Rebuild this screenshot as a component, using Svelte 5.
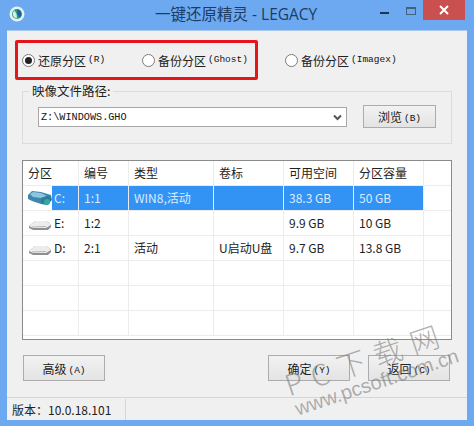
<script>
	const columns = ['分区', '编号', '类型', '卷标', '可用空间', '分区容量', ''];
	const rows = [
		{ drive: 'C:', cells: ['1:1', 'WIN8,活动', '', '38.3 GB', '50 GB'], selected: true },
		{ drive: 'E:', cells: ['1:2', '', '', '9.9 GB', '10 GB'] },
		{ drive: 'D:', cells: ['2:1', '活动', 'U启动U盘', '9.7 GB', '13.8 GB'] },
		{ drive: '', cells: ['', '', '', '', ''] },
		{ drive: '', cells: ['', '', '', '', ''] },
		{ drive: '', cells: ['', '', '', '', ''] }
	];
</script>

<div class="window">
	<header class="titlebar">
		<svg class="logo" width="16" height="16" viewBox="0 0 16 16">
			<circle cx="8" cy="8" r="7.500" fill="#e4f3ee" />
			<circle cx="8" cy="8" r="5" fill="#2a9a8a" />
			<path d="M8 3.500a4.500 4.500 0 0 1 2.500 8L8.500 8z" fill="#1d5c96" />
			<path d="M8 12.500a4.500 4.500 0 0 1-2.500-8L7.500 8z" fill="#d4f0e6" />
		</svg>
		<h1>一键还原精灵 - LEGACY</h1>
		<div class="controls">
			<span class="min"></span>
			<span class="max"></span>
			<span class="close">
				<svg width="10" height="10" viewBox="0 0 10 10"><path d="M1 1l8 8M9 1l-8 8" stroke="#fff" stroke-width="2" /></svg>
			</span>
		</div>
	</header>

	<main class="body">
		<div class="content">
			<div class="modes">
				<div class="highlight"></div>
				<label class="radio first"><span class="dot on"></span>还原分区<em>(R)</em></label>
				<label class="radio second"><span class="dot"></span>备份分区<em>(Ghost)</em></label>
				<label class="radio"><span class="dot"></span>备份分区<em>(Imagex)</em></label>
			</div>

			<fieldset class="image-group">
				<legend>映像文件路径:</legend>
				<div class="combo">
					<span>Z:\WINDOWS.GHO</span>
					<svg width="9" height="7" viewBox="0 0 9 7"><path d="M1 1.500l3.500 3.500 3.500-3.500" fill="none" stroke="#555" stroke-width="2" /></svg>
				</div>
				<button class="btn browse">浏览<em>(B)</em></button>
			</fieldset>

			<div class="table">
				<div class="row head">
					{#each columns as col}
						<div class="cell">{col}</div>
					{/each}
				</div>
				{#each rows as row}
					<div class="row" class:selected={row.selected}>
						<div class="cell drive">
							{#if row.drive}
								<svg class="disk" width="24" height="18" viewBox="0 0 24 18">
									{#if row.selected}
										<path d="M0 6l4-4 9 1 10 3 1 5-5 5-6-1-9-3-4-2z" fill="#3f86ad" />
										<path d="M2 5l3-2 8 1 6 3-6 2-8-1z" fill="#8fc4df" />
										<path d="M13 9l6-2 4 1v4l-4 4-6-2z" fill="#2b7d9b" />
										<circle cx="19" cy="13" r="3" fill="#37a89c" />
									{:else}
										<path d="M1 12l6-5 12 0 4 4v2l-3 3H5l-4-2z" fill="#8f8f8f" />
										<path d="M1 12l6-5 12 0 4 4-5 3H5z" fill="#ececec" />
										<path d="M4 13l14-.5" stroke="#b5b5b5" />
									{/if}
								</svg>
								<span class="letter">{row.drive}</span>
							{/if}
						</div>
						{#each row.cells as value}
							<div class="cell">{value}</div>
						{/each}
						<div class="cell tail"></div>
					</div>
				{/each}
			</div>

			<div class="actions">
				<button class="btn">高级<em>(A)</em></button>
				<div class="right">
					<button class="btn">确定<em>(Y)</em></button>
					<button class="btn">返回<em>(C)</em></button>
				</div>
			</div>
		</div>

		<footer class="status"><span>版本：10.0.18.101</span></footer>
	</main>

	<div class="watermark">
		<div class="big">P C 下 载 网</div>
		<div class="url">www.pcsoft.com.cn</div>
	</div>
</div>

<style>
	:global(body) {
		margin: 0;
	}

	.window {
		position: relative;
		width: 474px;
		height: 426px;
		overflow: hidden;
		background: #6ca9f0;
		display: flex;
		flex-direction: column;
		font-family: 'Noto Sans CJK SC', 'Liberation Sans', sans-serif;
		color: #222;
		box-sizing: border-box;
		padding: 0 7px 6px;
	}

	.titlebar {
		height: 30px;
		flex: none;
		display: flex;
		align-items: center;
		position: relative;
	}

	.logo {
		margin: -2px 0 0 2px;
	}

	h1 {
		position: absolute;
		left: 148px;
		top: 0;
		margin: 0;
		font-size: 15.500px;
		font-weight: 400;
		line-height: 28px;
		color: #1c3c63;
		font-family: 'Open Sans', 'Noto Sans CJK SC', sans-serif;
		white-space: nowrap;
	}

	.controls {
		position: absolute;
		right: 0;
		top: 0;
		display: flex;
		align-items: flex-start;
	}

	.min {
		width: 9px;
		height: 2px;
		background: #1c3550;
		margin: 12px 17px 0 0;
	}

	.max {
		width: 8px;
		height: 5px;
		border: 1px solid #45607f;
		border-top-width: 2px;
		margin: 7px 7px 0 0;
	}

	.close {
		width: 42px;
		height: 20px;
		margin-right: 2px;
		background: #c9504f;
		display: flex;
		align-items: center;
		justify-content: center;
	}

	.body {
		flex: 1;
		min-height: 0;
		background: #f0f0f0;
		display: flex;
		flex-direction: column;
		border-top: 1px solid #a9c8ea;
	}

	.content {
		flex: 1;
		padding: 0 15px;
		display: flex;
		flex-direction: column;
	}

	em {
		font-style: normal;
		font-family: 'Liberation Mono', monospace;
		font-size: 9.500px;
		margin-left: 2px;
		color: #111;
		position: relative;
		top: -1px;
	}

	.modes {
		position: relative;
		display: flex;
		align-items: center;
		height: 30px;
		margin-top: 14px;
		font-size: 12px;
	}

	.highlight {
		position: absolute;
		left: -7px;
		top: -5px;
		width: 237px;
		height: 34px;
		border: 3px solid #e8141c;
		border-radius: 2px;
		pointer-events: none;
	}

	.radio {
		display: flex;
		align-items: center;
		white-space: nowrap;
		gap: 3px;
	}

	.radio em {
		margin-left: -1px;
	}

	.first {
		width: 120px;
	}

	.second {
		width: 143px;
	}

	.dot {
		width: 11px;
		height: 11px;
		border: 1px solid #7b7b7b;
		border-radius: 50%;
		background: #fff;
		position: relative;
		flex: none;
	}

	.dot.on::after {
		content: '';
		position: absolute;
		inset: 2px;
		border-radius: 50%;
		background: #222;
	}

	fieldset.image-group {
		margin: 9px 0 0;
		padding: 0 15px;
		height: 60px;
		border: 1px solid #dcdcdc;
		box-sizing: border-box;
		display: flex;
		align-items: flex-start;
		position: relative;
		width: 429px;
	}

	legend {
		font-size: 12.500px;
		margin-left: -9px;
		padding: 0 3px;
		line-height: 14px;
	}

	.combo {
		width: 309px;
		height: 20px;
		margin-top: 9px;
		box-sizing: border-box;
		border: 1px solid #a8a8a8;
		background: #fff;
		display: flex;
		align-items: center;
		justify-content: space-between;
		padding: 0 4px 0 2px;
		font: 10.200px 'Liberation Mono', monospace;
		color: #111;
	}

	.btn {
		width: 82px;
		height: 26px;
		padding: 0;
		box-sizing: border-box;
		border: 1px solid #acacac;
		background: linear-gradient(#f2f2f2, #e3e3e3);
		font-family: inherit;
		font-size: 12px;
		color: #222;
	}

	.browse {
		width: 73px;
		height: 23px;
		margin: 7px 0 0 16px;
	}

	.table {
		margin-top: 16px;
		width: 430px;
		height: 180px;
		box-sizing: border-box;
		border: 1px solid #8a8a8a;
		background: #fff;
		overflow: hidden;
		font-size: 12px;
	}

	.row {
		display: grid;
		grid-template-columns: 56px 50px 85px 70px 70px 70px 28px;
		height: 25px;
		box-sizing: border-box;
		border-bottom: 1px solid #ececec;
	}

	.cell {
		border-right: 1px solid #ececec;
		padding-left: 5px;
		line-height: 24px;
		white-space: nowrap;
		overflow: hidden;
	}

	.tail {
		border-right: 0;
	}

	.drive {
		display: flex;
		align-items: center;
		padding: 0 0 0 5px;
	}

	.disk {
		flex: none;
	}

	.letter {
		flex: 1;
		padding-left: 2px;
		align-self: stretch;
	}

	.selected .cell {
		background: #3393f5;
		color: #d9ecff;
	}

	.selected .drive {
		background: #fff;
	}

	.selected .letter {
		background: #3393f5;
		color: #d9ecff;
	}

	.selected .tail {
		background: #fff;
	}

	.actions {
		display: flex;
		justify-content: space-between;
		margin-top: 15px;
		width: 428px;
		padding-left: 1px;
		box-sizing: border-box;
	}

	.right {
		display: flex;
		gap: 18px;
	}

	.status {
		height: 22px;
		flex: none;
		border-top: 1px solid #d6d6d6;
		font-size: 12px;
		display: flex;
		align-items: center;
	}

	.status span {
		width: 119px;
		padding-left: 5px;
		box-sizing: border-box;
		border-right: 1px solid #d6d6d6;
		line-height: 21px;
		white-space: nowrap;
	}

	.watermark {
		position: absolute;
		left: 280px;
		top: 369px;
		transform: rotate(-18.500deg);
		transform-origin: left top;
		color: rgba(125, 125, 125, 0.6);
		pointer-events: none;
		white-space: nowrap;
	}

	.big {
		font-size: 29px;
		line-height: 32px;
		font-weight: 300;
		letter-spacing: 1.500px;
	}

	.url {
		font-size: 20px;
		line-height: 22px;
		margin-left: 2px;
		font-family: 'Liberation Sans', sans-serif;
	}
</style>
